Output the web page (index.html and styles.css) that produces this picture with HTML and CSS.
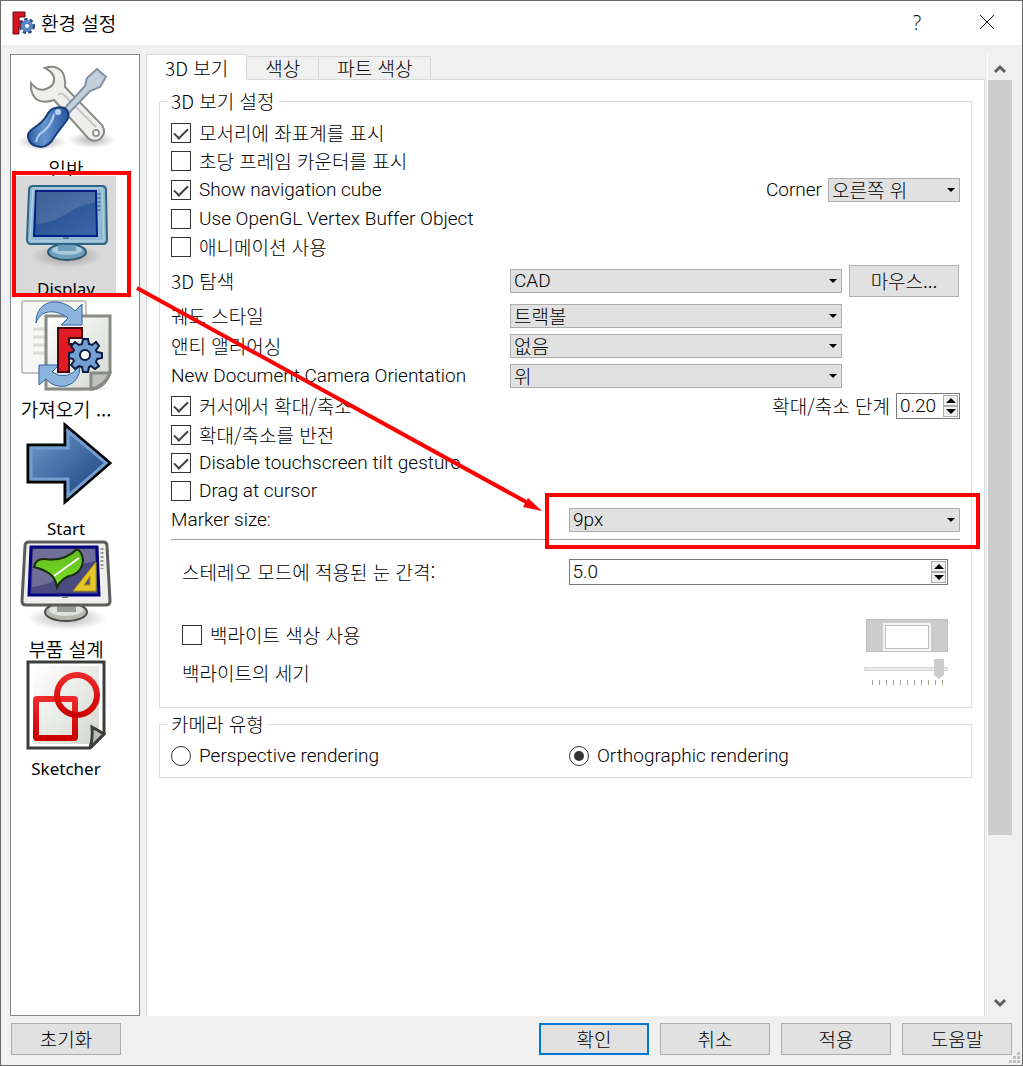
FILE: index.html
```html
<!DOCTYPE html>
<html lang="ko">

<head>
    <meta charset="UTF-8">
    <meta name="viewport" content="width=device-width, initial-scale=1.0">
    <title>환경 설정</title>
    <link rel="stylesheet" href="styles.css">
</head>

<body>
    <div class="dialog">
        <header class="titlebar">
            <svg class="app-icon" viewBox="0 0 24 24">
                <path d="M2 1H14V6H8V10H12V15H8V23H2Z" fill="#d8141c" stroke="#5c1216" />
                <circle cx="16" cy="15" r="6" fill="none" stroke="#27467f" stroke-width="4" stroke-dasharray="3 2" />
                <circle cx="16" cy="15" r="4" fill="#fff" stroke="#5a86c4" stroke-width="4" />
            </svg>
            <h1>환경 설정</h1>
            <button class="title-btn" aria-label="Help">?</button>
            <button class="title-btn" aria-label="Close">
                <svg width="16" height="16" viewBox="0 0 16 16"><path d="M1 1L15 15M15 1L1 15" stroke="#111" fill="none" /></svg>
            </button>
        </header>

        <main class="content">
            <ul class="sidebar">
                <li class="cut">
                    <svg viewBox="0 0 100 96">
                        <defs>
                            <radialGradient id="shadow"><stop offset="0" stop-color="#000" stop-opacity=".3" /><stop offset="1" stop-color="#000" stop-opacity="0" /></radialGradient>
                            <linearGradient id="handle"><stop offset="0" stop-color="#2f5fa5" /><stop offset=".4" stop-color="#6796d0" /><stop offset="1" stop-color="#2456a0" /></linearGradient>
                            <linearGradient id="screen" x2="1" y2="1"><stop offset="0" stop-color="#204a87" /><stop offset="1" stop-color="#3c66a8" /></linearGradient>
                            <linearGradient id="arrow" x2="1" y2="1"><stop offset="0" stop-color="#729fcf" /><stop offset="1" stop-color="#143a78" /></linearGradient>
                            <linearGradient id="paper" x2="1" y2="1"><stop offset="0" stop-color="#fff" /><stop offset="1" stop-color="#d3d7cf" /></linearGradient>
                            <linearGradient id="red" x2="0" y2="1"><stop offset="0" stop-color="#ef2929" /><stop offset="1" stop-color="#cc0000" /></linearGradient>
                            <linearGradient id="green" x2="0" y2="1"><stop offset="0" stop-color="#5fb81c" /><stop offset="1" stop-color="#7ee02a" /></linearGradient>
                        </defs>
                        <ellipse cx="26" cy="86" rx="25" ry="8" fill="url(#shadow)" />
                        <ellipse cx="76" cy="84" rx="24" ry="8" fill="url(#shadow)" />
                        <path d="M29 12C38 9 46 12 48 20Q50 26 49 31L86 69Q91 77 84 83Q78 87 72 82L38 44Q27 48 20 43Q14 37 15 27Q22 36 30 33Q39 30 38 22Q37 16 29 12Z" fill="#eeeeec" stroke="#888a85" stroke-width="2" />
                        <path d="M42 39Q45 36 48 39L80 71" fill="none" stroke="#c6c8c4" stroke-width="2" />
                        <circle cx="80" cy="77" r="3" fill="#fff" stroke="#999" stroke-width="2" />
                        <path d="M81 13L90 21L84 31L74 35L51 59L47 54L69 30L71 22Z" fill="#c3cfdb" stroke="#8292a6" stroke-width="2" />
                        <path d="M39 52Q47 50 51 54Q54 59 51 64Q45 72 39 80Q33 91 25 91Q12 90 12 79Q12 76 19 71Q27 66 31 59Q34 53 39 52Z" fill="url(#handle)" stroke="#173e78" stroke-width="2" />
                        <path d="M38 58Q36 68 28 75Q21 79 20 86" fill="none" stroke="#b9d2f0" stroke-width="2" />
                        <circle cx="42" cy="56" r="3" fill="#bcd4f0" />
                    </svg>
                    <span class="ko">일반</span>
                </li>
                <li class="cut selected">
                    <svg viewBox="0 0 100 96">
                        <ellipse cx="51" cy="80" rx="36" ry="12" fill="url(#shadow)" />
                        <ellipse cx="51" cy="76" rx="19" ry="8" fill="#6f9fba" stroke="#2c5871" stroke-width="2" />
                        <ellipse cx="51" cy="74" rx="15" ry="5" fill="#a9cbdd" />
                        <path d="M42 67H60V75H42Z" fill="#6d9cb8" />
                        <path d="M17 10H86Q90 10 90 14L91 63Q91 68 87 68H15Q11 68 11 63L13 14Q13 10 17 10Z" fill="#8fb9d2" stroke="#2f6586" stroke-width="2" />
                        <path d="M17 12H86L88 65H14Z" fill="none" stroke="#b9d7e7" />
                        <path d="M20 15H80L81 60H18Z" fill="url(#screen)" stroke="#001f87" stroke-width="2" />
                        <path d="M20 16H79V26Q60 31 48 39Q36 47 20 48Z" fill="#fff" fill-opacity=".13" />
                        <path d="M83 17V36" stroke="#537f9d" stroke-width="3" stroke-dasharray="2 2" />
                        <path d="M47 62H53" stroke="#537f9d" stroke-width="2" />
                    </svg>
                    <span>Display</span>
                </li>
                <li>
                    <svg viewBox="0 0 100 96">
                        <ellipse cx="60" cy="92" rx="34" ry="4" fill="url(#shadow)" />
                        <rect x="6" y="5" width="64" height="72" rx="2" fill="#f7f7f6" stroke="#c2c4c0" stroke-width="2" />
                        <path d="M17 33H33M17 41H33M17 49H33M17 57H33" stroke="#dcdcdc" stroke-width="3" />
                        <path d="M30 20H94V77Q89 91 77 93H30Z" fill="url(#paper)" stroke="#888a85" stroke-width="3" />
                        <path d="M75 93V77H94Q89 90 75 93Z" fill="#bfc1bd" stroke="#888a85" stroke-width="3" />
                        <path d="M20 27C20 2 46 1 59 15L66 8V29H45L52 22C40 13 25 13 20 27Z" fill="#8db4dd" stroke="#3465a4" />
                        <path d="M23 89V69H43L36 76Q51 86 64 70Q64 86 50 90Q38 92 30 83Z" fill="#8db4dd" stroke="#3465a4" />
                        <path d="M42 32H66V42H53V48H61V59H53V76H42Z" fill="#e01b24" stroke="#4a0508" stroke-width="2" />
                        <g stroke="#0c1a44" stroke-width="2" fill="#729fcf">
                            <path d="M66 48L67 43H72L73 48L76 49L80 46L83 50L80 54L81 56L86 57V62L81 63L80 66L83 70L79 73L75 70L73 71L72 76H67L66 71L63 70L59 73L55 69L58 65L57 63L53 62V57L57 56L58 54L55 50L59 46L63 49Z" />
                            <circle cx="69" cy="59" r="5" fill="#fff" />
                        </g>
                    </svg>
                    <span class="ko">가져오기 ...</span>
                </li>
                <li>
                    <svg viewBox="0 0 100 96">
                        <path d="M12 29H49V9L94 47L49 86V66H12Z" fill="url(#arrow)" stroke="#000" stroke-width="3" />
                        <path d="M15 32H52V15L90 47L52 80V63H15Z" fill="none" stroke="#729fcf" stroke-width="3" />
                    </svg>
                    <span>Start</span>
                </li>
                <li>
                    <svg viewBox="0 0 100 96">
                        <ellipse cx="51" cy="82" rx="40" ry="12" fill="url(#shadow)" />
                        <ellipse cx="50" cy="76" rx="21" ry="9" fill="#b4b8b0" stroke="#4a4c48" stroke-width="2" />
                        <ellipse cx="50" cy="74" rx="17" ry="6" fill="#dfe1dc" />
                        <path d="M41 69H60V76H41Z" fill="#9a9d96" />
                        <path d="M13 6H87Q91 6 91 10L94 65Q94 69 90 69H10Q6 69 6 65L9 10Q9 6 13 6Z" fill="#eeeeec" stroke="#5a5c58" stroke-width="3" />
                        <path d="M15 11H81L83 59H13Z" fill="#4b4a80" stroke="#000080" stroke-width="3" />
                        <path d="M17 13H79V25Q57 29 42 42Q30 50 16 51Z" fill="#fff" fill-opacity=".2" />
                        <path d="M18 31Q20 22 29 23Q48 26 61 13Q67 17 67 25Q66 35 57 39Q46 41 41 51Q40 43 34 38Q27 33 18 31Z" fill="url(#green)" stroke="#172c08" stroke-width="2" />
                        <path d="M38 40L63 22" stroke="#fff" stroke-width="2" />
                        <path d="M80 26V55H57ZM74 40L68 49H74Z" fill="#e6c72c" fill-rule="evenodd" stroke="#b29300" />
                        <path d="M86 12V33" stroke="#999" stroke-width="3" stroke-dasharray="2 2" />
                        <path d="M46 61H52" stroke="#777" stroke-width="2" />
                    </svg>
                    <span class="ko">부품 설계</span>
                </li>
                <li>
                    <svg viewBox="0 0 100 96">
                        <path d="M12 6H88V78L74 92H12Z" fill="#fff" stroke="#3c3e3c" stroke-width="3" />
                        <path d="M17 10H83V72L74 88H17Z" fill="url(#paper)" />
                        <path d="M76 71Q80 73 88 78L74 92Q77 82 76 71Z" fill="#babdb6" stroke="#3c3e3c" stroke-width="3" />
                        <rect x="20" y="43" width="39" height="39" rx="1" fill="none" stroke="url(#red)" stroke-width="6" />
                        <circle cx="61" cy="39" r="20" fill="none" stroke="url(#red)" stroke-width="6" />
                    </svg>
                    <span>Sketcher</span>
                </li>
            </ul>

            <section class="page">
                <nav class="tabs">
                    <button class="active">3D 보기</button>
                    <button>색상</button>
                    <button>파트 색상</button>
                </nav>
                <div class="panel">
                    <fieldset class="view-settings">
                        <legend>3D 보기 설정</legend>
                        <div class="row"><label><input type="checkbox" checked>모서리에 좌표계를 표시</label></div>
                        <div class="row"><label><input type="checkbox">초당 프레임 카운터를 표시</label></div>
                        <div class="row tall">
                            <label class="en"><input type="checkbox" checked>Show navigation cube</label>
                            <div class="right">
                                <label for="corner" class="en">Corner</label>
                                <span class="combo corner"><select id="corner"><option>오른쪽 위</option></select></span>
                            </div>
                        </div>
                        <div class="row"><label class="en"><input type="checkbox">Use OpenGL Vertex Buffer Object</label></div>
                        <div class="row"><label><input type="checkbox">애니메이션 사용</label></div>
                        <div class="row three nav-row">
                            <label for="nav">3D 탐색</label>
                            <span class="combo en"><select id="nav"><option>CAD</option></select></span>
                            <button class="btn">마우스...</button>
                        </div>
                        <div class="row three tall">
                            <label for="orbit">궤도 스타일</label>
                            <span class="combo"><select id="orbit"><option>트랙볼</option></select></span>
                        </div>
                        <div class="row three tall">
                            <label for="aa">앤티 앨리어싱</label>
                            <span class="combo"><select id="aa"><option>없음</option></select></span>
                        </div>
                        <div class="row three tall">
                            <label for="camera" class="en">New Document Camera Orientation</label>
                            <span class="combo"><select id="camera"><option>위</option></select></span>
                        </div>
                        <div class="row tall">
                            <label><input type="checkbox" checked>커서에서 확대/축소</label>
                            <div class="right">
                                <label for="step">확대/축소 단계</label>
                                <span class="spin step en"><input type="text" id="step" value="0.20"><span class="arrows"><button aria-label="Up"></button><button aria-label="Down"></button></span></span>
                            </div>
                        </div>
                        <div class="row"><label><input type="checkbox" checked>확대/축소를 반전</label></div>
                        <div class="row"><label class="en"><input type="checkbox" checked>Disable touchscreen tilt gesture</label></div>
                        <div class="row"><label class="en"><input type="checkbox">Drag at cursor</label></div>
                        <div class="row two tall">
                            <label for="marker" class="en">Marker size:</label>
                            <span class="combo en"><select id="marker"><option>9px</option></select></span>
                        </div>
                        <hr>
                        <div class="stereo">
                            <div class="row two tall">
                                <label for="eye">스테레오 모드에 적용된 눈 간격:</label>
                                <span class="spin en"><input type="text" id="eye" value="5.0"><span class="arrows"><button aria-label="Up"></button><button aria-label="Down"></button></span></span>
                            </div>
                            <div class="row backlight">
                                <label><input type="checkbox">백라이트 색상 사용</label>
                                <button class="color-btn" disabled aria-label="백라이트 색상"></button>
                            </div>
                            <div class="row intensity">
                                <label for="light">백라이트의 세기</label>
                                <div class="slider">
                                    <input type="range" id="light" min="0" max="100" value="96" disabled>
                                    <div class="ticks"></div>
                                </div>
                            </div>
                        </div>
                    </fieldset>

                    <fieldset class="camera-type">
                        <legend>카메라 유형</legend>
                        <div class="row two">
                            <label class="en"><input type="radio" name="cam">Perspective rendering</label>
                            <label class="en"><input type="radio" name="cam" checked>Orthographic rendering</label>
                        </div>
                    </fieldset>
                </div>
            </section>

            <div class="scrollbar">
                <svg viewBox="0 0 24 26"><path d="M7 18L12 13L17 18" /></svg>
                <div class="track"><div class="thumb"></div></div>
                <svg viewBox="0 0 24 26"><path d="M7 10L12 15L17 10" /></svg>
            </div>
        </main>

        <footer class="buttons">
            <button class="btn reset">초기화</button>
            <button class="btn default">확인</button>
            <button class="btn">취소</button>
            <button class="btn">적용</button>
            <button class="btn">도움말</button>
        </footer>
        <svg class="grip" viewBox="0 0 12 12"><path d="M8 0h3v3h-3zM4 4h3v3h-3zM8 4h3v3h-3zM0 8h3v3h-3zM4 8h3v3h-3zM8 8h3v3h-3z" fill="#bfbfbf" /></svg>

        <!-- red guide marks -->
        <svg class="marks" width="1000" height="560" viewBox="0 0 1000 560">
            <rect x="14" y="173" width="115" height="122" />
            <rect x="547" y="495" width="431" height="52" />
            <path d="M137 288L528 503" />
            <path class="head" d="M542 511L528 498L523 507Z" />
        </svg>
    </div>
</body>

</html>
```
FILE: styles.css
```css
* {
    box-sizing: border-box;
}

body {
    margin: 0;
    font-family: "Noto Sans CJK KR", sans-serif;
    font-size: 19px;
    font-weight: 300;
    line-height: 24px;
    color: #000;
}

button,
input,
select {
    font: inherit;
    color: inherit;
    margin: 0;
}

.en {
    font-family: Roboto, "Noto Sans CJK KR", sans-serif;
}

.dialog {
    position: relative;
    display: flex;
    flex-direction: column;
    min-height: 100vh;
    background: #f0f0f0;
    border: 1px solid #6b6b6b;
}

.titlebar {
    display: flex;
    align-items: center;
    height: 44px;
    padding-left: 10px;
    background: #fff;
}

.app-icon {
    width: 24px;
    height: 24px;
}

.titlebar h1 {
    flex: 1;
    margin: 0 0 0 6px;
    font-size: 19px;
    font-weight: 350;
}

.title-btn {
    width: 70px;
    height: 44px;
    padding: 0;
    border: none;
    background: none;
    font-family: "Open Sans", sans-serif;
    font-size: 20px;
}

.content {
    flex: 1;
    display: flex;
    padding: 9px 10px 0 9px;
}

/* page list */
.sidebar {
    width: 130px;
    margin: 0 6px 0 0;
    padding: 1px 5px;
    list-style: none;
    background: #fff;
    border: 1px solid #828790;
}

.sidebar li {
    width: 100px;
    height: 120px;
    text-align: center;
    font-family: "Noto Sans", "Noto Sans CJK KR", sans-serif;
    font-size: 17px;
    font-weight: 400;
}

.sidebar svg {
    display: block;
    width: 100px;
    height: 96px;
    margin-bottom: 5px;
}

.sidebar span {
    display: block;
    white-space: nowrap;
}

.sidebar .ko {
    margin: 0 -2px;
    font-family: "Noto Sans CJK KR", sans-serif;
    font-size: 19px;
    font-weight: 350;
}

.sidebar .cut {
    overflow: hidden;
}

.sidebar .selected {
    background: #d9d9d9;
}

/* tabs */
.page {
    flex: 1;
    display: flex;
    flex-direction: column;
}

.tabs {
    display: flex;
    align-items: flex-end;
    height: 26px;
}

.tabs button {
    height: 24px;
    padding: 0 18px;
    line-height: 22px;
    border: 1px solid #d9d9d9;
    border-left: none;
    background: #f0f0f0;
}

.tabs .active {
    position: relative;
    height: 26px;
    border-left: 1px solid #d9d9d9;
    border-bottom: none;
    background: #fff;
}

.panel {
    flex: 1;
    margin-top: -1px;
    padding: 9px 12px;
    background: #fff;
    border: 1px solid #d9d9d9;
    border-bottom: none;
}

fieldset {
    min-width: 0;
    margin: 0 0 4px;
    padding: 8px 11px 9px;
    border: 1px solid #dcdcdc;
}

legend {
    margin-left: -4px;
    padding: 0 4px;
}

.view-settings {
    padding-bottom: 20px;
}

.row {
    display: flex;
    align-items: center;
    justify-content: space-between;
    min-height: 24px;
    margin-bottom: 4px;
}

.tall {
    min-height: 26px;
}

.nav-row {
    min-height: 36px;
}

.two {
    display: grid;
    grid-template-columns: 1fr 1fr;
    column-gap: 7px;
}

.three {
    display: grid;
    grid-template-columns: 1fr 332px 110px;
    column-gap: 7px;
    padding-right: 1px;
}

.right {
    display: flex;
    align-items: center;
    gap: 6px;
}

label {
    display: flex;
    align-items: center;
    white-space: nowrap;
}

input[type="checkbox"],
input[type="radio"] {
    appearance: none;
    display: flex;
    align-items: center;
    justify-content: center;
    width: 20px;
    height: 20px;
    margin-right: 8px;
    border: 1px solid #333;
    background: #fff;
}

input[type="checkbox"]:checked::before {
    content: "";
    width: 6px;
    height: 12px;
    margin-bottom: 3px;
    border: solid #444;
    border-width: 0 2px 2px 0;
    transform: rotate(45deg);
}

input[type="radio"] {
    border-radius: 50%;
}

input[type="radio"]:checked::before {
    content: "";
    width: 10px;
    height: 10px;
    border-radius: 50%;
    background: #333;
}

.combo {
    position: relative;
    display: block;
    height: 24px;
}

.combo select {
    appearance: none;
    display: block;
    width: 100%;
    height: 24px;
    padding: 0 3px;
    line-height: 22px;
    border: 1px solid #adadad;
    border-radius: 0;
    background: #e1e1e1;
}

.combo::after {
    content: "";
    position: absolute;
    right: 5px;
    top: 10px;
    border: 4px solid transparent;
    border-top-color: #000;
    border-bottom: none;
}

.corner {
    width: 132px;
}

.spin {
    display: flex;
    height: 26px;
    padding: 1px;
    border: 1px solid #7a7a7a;
    background: #fff;
}

.spin input {
    flex: 1;
    min-width: 0;
    padding: 0 2px;
    border: none;
    background: none;
}

.step {
    width: 64px;
}

.arrows {
    display: flex;
    flex-direction: column;
    width: 15px;
}

.arrows button {
    flex: 1;
    display: flex;
    align-items: center;
    justify-content: center;
    padding: 0;
    border: 1px solid #adadad;
    background: #f0f0f0;
}

.arrows button::before {
    content: "";
    border: 5px solid transparent;
    border-bottom-color: #000;
    border-top: none;
}

.arrows button + button::before {
    transform: rotate(180deg);
}

hr {
    height: 1px;
    margin: 6px 0 0;
    border: none;
    background: #a0a0a0;
}

/* stereo and backlight */
.stereo {
    padding: 19px 12px 0 11px;
}

.backlight {
    min-height: 34px;
    margin: 33px 0 7px;
}

.color-btn {
    width: 82px;
    height: 33px;
    padding: 3px 16px;
    border: 1px solid #bfbfbf;
    background: #ccc;
}

.color-btn::before {
    content: "";
    display: block;
    height: 24px;
    border: 2px solid #f4f4f4;
    outline: 1px solid #bfbfbf;
    outline-offset: -3px;
    background: #fff;
}

.intensity {
    min-height: 28px;
    margin-bottom: 0;
}

.slider {
    width: 84px;
}

.slider input {
    appearance: none;
    display: block;
    width: 84px;
    height: 20px;
    background: none;
}

.slider input::-webkit-slider-runnable-track {
    height: 4px;
    border: 1px solid #d6d6d6;
    background: #e7eaea;
}

.slider input::-webkit-slider-thumb {
    appearance: none;
    width: 10px;
    height: 20px;
    margin-top: -9px;
    background: #ccc;
    clip-path: polygon(0 0, 100% 0, 100% 80%, 50% 100%, 0 80%);
}

.ticks {
    width: 71px;
    height: 5px;
    margin: 1px 0 2px 8px;
    background: repeating-linear-gradient(to right, #a8a598 0 1px, transparent 1px 7px);
}

.camera-type .row {
    margin-bottom: 0;
}

.scrollbar {
    display: flex;
    flex-direction: column;
    width: 25px;
    margin-left: 2px;
    border-left: 1px solid #fff;
}

.scrollbar svg {
    width: 24px;
    height: 26px;
    fill: none;
    stroke: #606060;
    stroke-width: 3;
}

.track {
    flex: 1;
    display: flex;
    flex-direction: column;
}

.thumb {
    flex: 0 0 83%;
    background: #cdcdcd;
}

.buttons {
    display: flex;
    gap: 11px;
    padding: 7px 10px 10px;
}

.btn {
    width: 110px;
    height: 32px;
    padding: 0;
    border: 1px solid #adadad;
    background: #e1e1e1;
}

.reset {
    margin-right: auto;
}

.default {
    border: 2px solid #0078d7;
}

.grip {
    position: absolute;
    right: 1px;
    bottom: 1px;
    width: 12px;
    height: 12px;
}

.marks {
    position: absolute;
    left: -1px;
    top: -1px;
    fill: none;
    stroke: #f00;
    stroke-width: 4;
    pointer-events: none;
}

.marks .head {
    fill: #f00;
    stroke: none;
}
```
